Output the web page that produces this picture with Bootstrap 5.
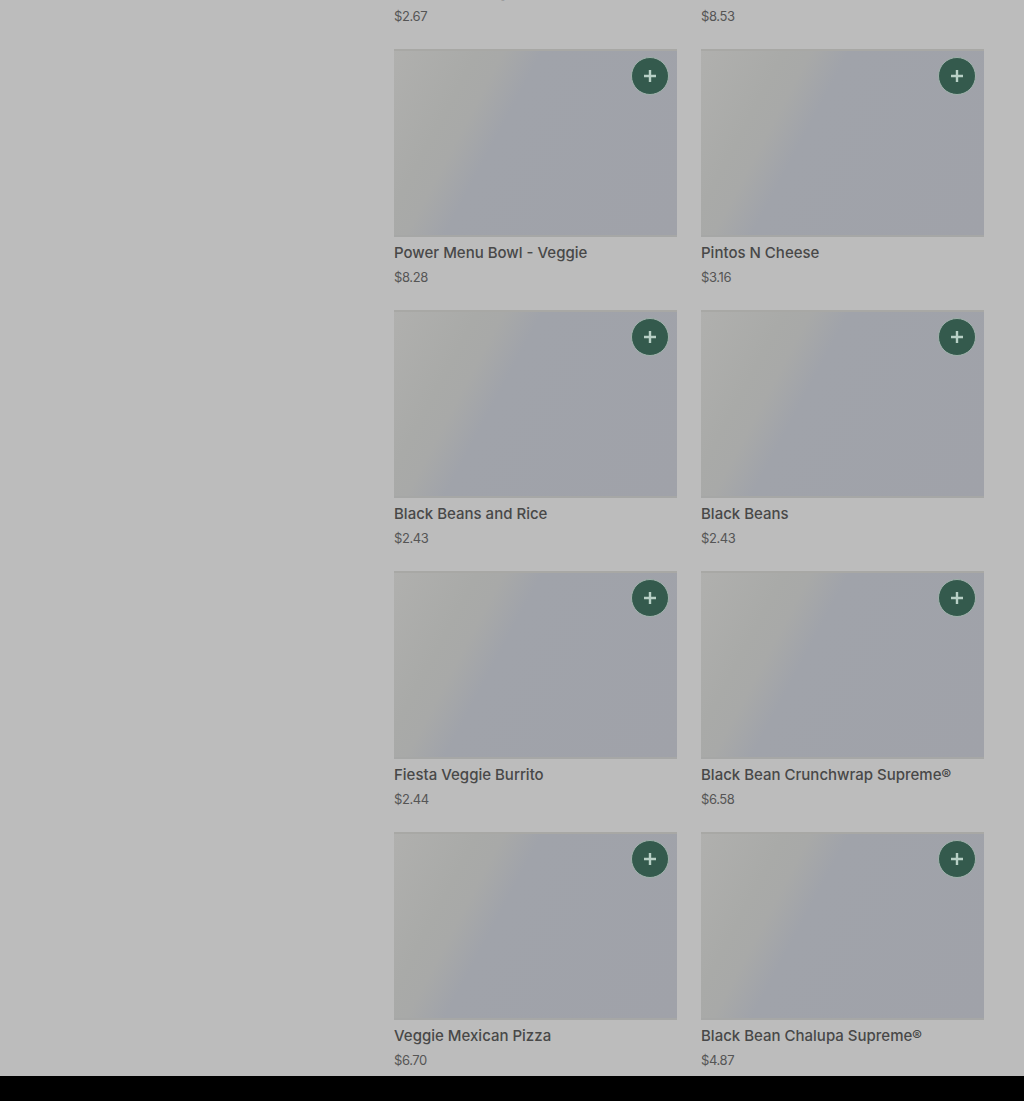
<!DOCTYPE html>
<html lang="en">
<head>
  <meta charset="UTF-8">
  <title>Menu</title>
  <link href="https://cdn.jsdelivr.net/npm/bootstrap@5.3.0/dist/css/bootstrap.min.css" rel="stylesheet">
  <style>
    html, body {
      height: 1101px;
      overflow: hidden;
      background: #000;
    }
    .page-area {
      height: 1076px;
      overflow: hidden;
      background: #bcbcbc;
      font-family: Inter, Roboto, sans-serif;
    }
    .menu-list {
      width: 590px;
      margin-left: 394px;
      margin-top: -212px;
      display: grid;
      grid-template-columns: 283px 283px;
      column-gap: 24px;
      row-gap: 23px;
    }
    .dish-pic {
      height: 188px;
      background: linear-gradient(118deg, #b0b0ae 0%, #a9aaa8 22%, #a8a9a8 29%, #a0a3aa 39%, #a0a2a9 100%);
      box-shadow: inset 0 2px 0 #a8a8a5, inset 0 -2px 0 #a6a7a6;
    }
    .add-btn {
      top: 8px;
      right: 8px;
      width: 38px;
      height: 38px;
      background: #345a4d;
      border: 1px solid #9fb2ab;
    }
    .dish-name {
      font-size: 15px;
      line-height: 24px;
      font-weight: 500;
      color: #484848;
      margin-top: 4px;
    }
    .dish-price {
      font-size: 13px;
      line-height: 20px;
      letter-spacing: -.4px;
      color: #555;
      margin-top: 2px;
    }
  </style>
</head>
<body>
  <div class="page-area">
    <div class="menu-list" id="menuList"></div>
  </div>

  <script>
    const dishes = [
      ["Cinnamon Delights", "$2.67"], ["Cheese Roll Up", "$8.53"],
      ["Power Menu Bowl - Veggie", "$8.28"], ["Pintos N Cheese", "$3.16"],
      ["Black Beans and Rice", "$2.43"], ["Black Beans", "$2.43"],
      ["Fiesta Veggie Burrito", "$2.44"], ["Black Bean Crunchwrap Supreme®", "$6.58"],
      ["Veggie Mexican Pizza", "$6.70"], ["Black Bean Chalupa Supreme®", "$4.87"]
    ];
    document.getElementById("menuList").innerHTML = dishes.map(d => `
      <div>
        <div class="dish-pic position-relative">
          <button type="button" class="add-btn position-absolute rounded-circle d-flex align-items-center justify-content-center p-0">
            <svg width="12" height="12" viewBox="0 0 12 12"><path d="M6 0v12M0 6h12" stroke="#b8d0c6" stroke-width="2.4"/></svg>
          </button>
        </div>
        <div class="dish-name">${d[0]}</div>
        <div class="dish-price">${d[1]}</div>
      </div>`).join("");
  </script>
  <script src="https://cdn.jsdelivr.net/npm/bootstrap@5.3.0/dist/js/bootstrap.bundle.min.js"></script>
</body>
</html>
